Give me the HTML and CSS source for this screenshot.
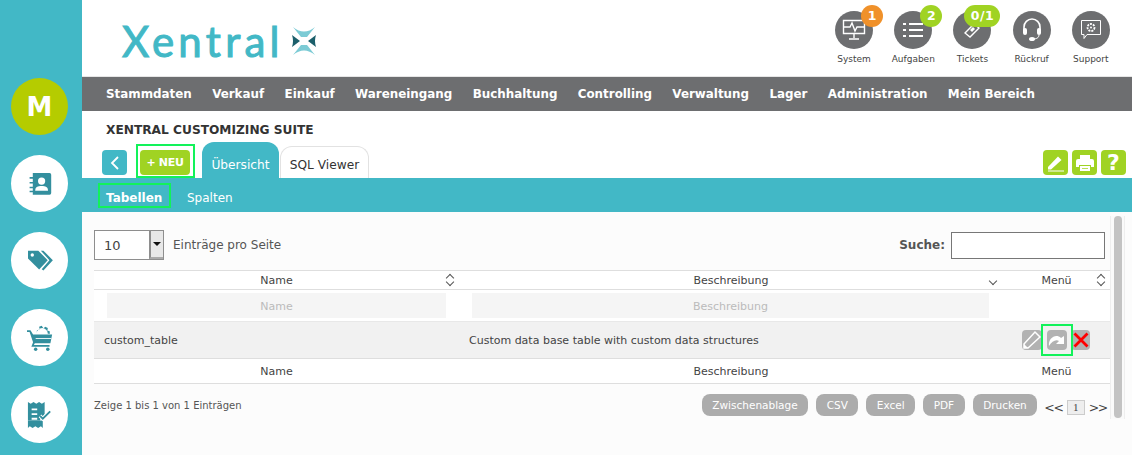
FILE: index.html
```html
<!DOCTYPE html>
<html lang="de">
<head>
<meta charset="utf-8">
<title>Xentral</title>
<link rel="stylesheet" href="styles.css">
</head>
<body>
<div class="app">
  <aside class="side">
    <div class="orb orb-user">M</div>
    <div class="orb"><svg width="24" height="25" viewBox="0 0 30 30"><path class="ic" d="M6 2h21a2 2 0 0 1 2 2v23a2 2 0 0 1-2 2H6v-3H2v-2h4v-3H2v-2h4v-4H2v-2h4V9H2V7h4z"/><circle cx="17" cy="12" r="4.500" fill="#fff"/><path d="M9 24c0-5 3-6 8-6s8 1 8 6z" fill="#fff"/></svg></div>
    <div class="orb"><svg width="26" height="24" viewBox="0 0 30 28"><path class="ic" d="M1 2h12l11 11-10 11L1 11z"/><circle cx="6" cy="7" r="2" fill="#fff"/><path d="M16 2h3l11 11-11 12-2-1.500L26 13z" class="ic"/></svg></div>
    <div class="orb"><svg width="26" height="28" viewBox="0 0 30 30"><path class="ic" d="M0 6h4l3 5h22l-2 10H9l-1 2h18v2H5l2-5L3 8H0z"/><circle cx="10" cy="28" r="2" class="ic"/><circle cx="24" cy="28" r="2" class="ic"/><path class="ic" d="M11 10a6.500 6.500 0 0 1 13 0h2.500l-.5-3-2.500-.5.500-3-3-1.500-2 2-2-3-3 1 .5 3-3 1-.5 4z"/><path d="M10 15h18v1H10z" fill="#fff"/></svg></div>
    <div class="orb"><svg width="26" height="26" viewBox="0 0 28 28"><path class="ic" d="M1 0l3 2 3-2 3 2 3-2 3 2 3-2v13l-5 6v1H1z"/><path class="ic" d="M1 20h16v8l-2-2-3 2-3-2-3 2-3-2-2 2z"/><path d="M5 7h6v2H5zM5 12h6v2H5zM5 17h6v2H5z" fill="#fff"/><path d="M14 15l3 3 8-8" fill="none" stroke="#fff" stroke-width="4"/><path d="M14 15l3 3 8-8" fill="none" stroke="#338f9e" stroke-width="2"/></svg></div>
  </aside>
  <div class="main">
    <header class="top">
      <div class="logo"><span class="logo-word">Xentral</span>
        <svg width="30" height="30" viewBox="0 0 30 30"><path d="M4 1q11 9 22 0l-8 10h-6z" fill="#7ccbd5"/><path d="M4 29q11-9 22 0l-8-10h-6z" fill="#7ccbd5"/><path d="M3 9l8 6-8 6q2-6 0-12z" fill="#1c5f6b"/><path d="M27 9l-8 6 8 6q-2-6 0-12z" fill="#1c5f6b"/></svg>
      </div>
      <nav class="tools">
        <div class="tool"><div class="tool-ic"><svg width="24" height="22" viewBox="0 0 24 22"><path d="M1.500 1.500h21v13h-21zM12 15v4M7 20h10M2 8h6l2-4 3 8 2-4h7" fill="none" stroke="#fff" stroke-width="1.400"/></svg><b class="badge badge-o">1</b></div><span>System</span></div>
        <div class="tool"><div class="tool-ic"><svg width="20" height="16" viewBox="0 0 20 16"><path d="M0 1h3v2H0zM0 7h3v2H0zM0 13h3v2H0zM6 1h14v2H6zM6 7h14v2H6zM6 13h14v2H6z" fill="#fff"/></svg><b class="badge badge-g">2</b></div><span>Aufgaben</span></div>
        <div class="tool"><div class="tool-ic"><svg width="16" height="16" viewBox="0 0 16 16"><path d="M1 11L10 2l5 4-9 9z" fill="none" stroke="#fff" stroke-width="1.400"/><path d="M6 8l3-3 2 2-3 3z" fill="#fff"/></svg><b class="badge badge-w">0/1</b></div><span>Tickets</span></div>
        <div class="tool"><div class="tool-ic"><svg width="22" height="24" viewBox="0 0 22 24"><path d="M3 12V9a8 8 0 0 1 16 0v3" fill="none" stroke="#fff" stroke-width="1.600"/><rect x="2" y="10" width="4" height="7" rx="2" fill="#fff"/><rect x="16" y="10" width="4" height="7" rx="2" fill="#fff"/><path d="M18 17c0 3-3 4-6 4" fill="none" stroke="#fff"/><ellipse cx="11" cy="21" rx="3" ry="2" fill="#fff"/></svg></div><span>Rückruf</span></div>
        <div class="tool"><div class="tool-ic"><svg width="22" height="22" viewBox="0 0 22 22"><path d="M1.500 1.500h19v14H7l-3 4v-4H1.500z" fill="none" stroke="#fff"/><circle cx="11" cy="8.500" r="3.500" fill="none" stroke="#fff" stroke-width="1.800" stroke-dasharray="2 1"/><circle cx="11" cy="8.500" r="1" fill="#fff"/></svg></div><span>Support</span></div>
      </nav>
    </header>
    <nav class="menu">
      <a>Stammdaten</a><a>Verkauf</a><a>Einkauf</a><a>Wareneingang</a><a>Buchhaltung</a><a>Controlling</a><a>Verwaltung</a><a>Lager</a><a>Administration</a><a>Mein Bereich</a>
    </nav>
    <h1 class="title">XENTRAL CUSTOMIZING SUITE</h1>
    <div class="tabbar">
      <button class="back"><svg width="10" height="14" viewBox="0 0 10 14"><path d="M8 1L2 7l6 6" fill="none" stroke="#fff" stroke-width="1.800"/></svg></button>
      <div class="mark mark-neu"><button class="neu">+ NEU</button></div>
      <div class="tab tab-on">Übersicht</div>
      <div class="tab tab-off">SQL Viewer</div>
      <div class="actions">
        <button class="act"><svg width="18" height="18" viewBox="0 0 18 18"><path d="M1 13L11 2.500l3.500 3.500L4 15.500H1z" fill="#fff"/><path d="M1 17h16" stroke="#fff"/></svg></button>
        <button class="act"><svg width="18" height="18" viewBox="0 0 18 18"><path d="M4 1h10v4H4z" fill="#fff"/><path d="M2 5h14a2 2 0 0 1 2 2v6h-3v-2H3v2H0V7a2 2 0 0 1 2-2z" fill="#fff"/><path d="M4 12h10v5H4z" fill="#fff"/><path d="M6 14h6v.800H6z" fill="#a5d82a"/></svg></button>
        <button class="act act-q">?</button>
      </div>
    </div>
    <div class="subbar">
      <a class="sub sub-on">Tabellen</a>
      <a class="sub">Spalten</a>
    </div>
    <div class="body">
      <div class="panel">
        <div class="controls">
          <div class="select"><span class="select-val">10</span><span class="select-arrow"></span></div>
          <span class="per">Einträge pro Seite</span>
          <label class="search">Suche:</label>
          <div class="search-box"></div>
        </div>
        <div class="table">
          <div class="row row-head">
            <div class="c c1">Name<i class="sort"></i></div>
            <div class="c c2">Beschreibung<i class="sort sort-down"></i></div>
            <div class="c c3">Menü<i class="sort"></i></div>
          </div>
          <div class="row row-filter">
            <div class="c c1"><div class="filter filter-a">Name</div></div>
            <div class="c c2"><div class="filter filter-b">Beschreibung</div></div>
            <div class="c c3"></div>
          </div>
          <div class="row row-data">
            <div class="c c1 cell-l">custom_table</div>
            <div class="c c2 cell-d">Custom data base table with custom data structures</div>
            <div class="c c3 icons">
              <span class="ibtn ibtn-edit"><svg width="20" height="20" viewBox="0 0 20 20"><path d="M2 14L13 2l5 5L6 18H2z" fill="none" stroke="#fff" stroke-width="1.500"/><path d="M2 14l4 4H2z" fill="#fff"/></svg></span>
              <span class="ibox"><span class="ibtn"><svg width="18" height="16" viewBox="0 0 18 16"><path d="M1 14C0 6 8 1 13 6l3-2v8H8l3-3C8 7 4 9 1 14z" fill="#fff"/></svg></span></span>
              <span class="ibtn ibtn-x"><svg width="16" height="16" viewBox="0 0 16 16"><path d="M1.500 1.500l13 13M14.500 1.500l-13 13" stroke="#f00" stroke-width="2.800"/></svg></span>
            </div>
          </div>
          <div class="row row-foot">
            <div class="c c1">Name</div>
            <div class="c c2">Beschreibung</div>
            <div class="c c3">Menü</div>
          </div>
        </div>
        <div class="tfoot">
          <span class="info">Zeige 1 bis 1 von 1 Einträgen</span>
          <div class="exports">
            <button class="exp">Zwischenablage</button>
            <button class="exp">CSV</button>
            <button class="exp">Excel</button>
            <button class="exp">PDF</button>
            <button class="exp">Drucken</button>
          </div>
          <div class="pager"><span>&lt;&lt;</span><span class="page">1</span><span>&gt;&gt;</span></div>
        </div>
      </div>
      <div class="scroll"><div class="thumb"></div></div>
    </div>
  </div>
</div>
</body>
</html>
```

FILE: styles.css
```css
* { box-sizing: border-box; }
html, body { margin: 0; height: 455px; overflow: hidden; }
body { font-family: "DejaVu Sans", Verdana, sans-serif; color: #333; background: #fff; }
button { font-family: inherit; border: 0; padding: 0; }

.app { display: flex; height: 455px; }
.side { width: 82px; flex: none; background: #42b8c6; padding: 78px 0 0 11px; display: flex; flex-direction: column; gap: 20px; }
.orb { width: 57px; height: 57px; border-radius: 50%; background: #fff; display: flex; align-items: center; justify-content: center; }
.orb-user { background: #b5cc00; color: #fff; font-weight: 700; font-size: 26px; }
.ic { fill: #338f9e; }

.main { flex: 1; min-width: 0; display: flex; flex-direction: column; }
.top { height: 76px; display: flex; justify-content: space-between; padding: 11px 11.600px 0 40px; }
.logo { display: flex; align-items: flex-start; gap: 5px; padding-top: 7px; }
.logo-word { font-family: "Lato", sans-serif; font-size: 42px; line-height: 46px; letter-spacing: 4.300px; color: #42b8c6; -webkit-text-stroke: 1px #42b8c6; }
.logo svg { margin-top: 8px; }
.tools { display: flex; }
.tool { width: 59.200px; display: flex; flex-direction: column; align-items: center; font-size: 9px; color: #444; }
.tool-ic { position: relative; width: 38px; height: 38px; border-radius: 50%; background: #6d6e70; display: flex; align-items: center; justify-content: center; margin-bottom: 4px; }
.tool span { line-height: 13px; }
.badge { position: absolute; top: -6px; height: 22px; border-radius: 11px; color: #fff; font-size: 12.500px; line-height: 22px; text-align: center; }
.badge-o { left: 26px; width: 22px; background: #f0912a; }
.badge-g { left: 26px; width: 22px; background: #a0d323; }
.badge-w { left: 11px; width: 36px; background: #a0d323; letter-spacing: .5px; }

.menu { height: 35px; background: #6d6e70; display: flex; align-items: center; padding-left: 24px; gap: 20.330px; border-top: 1px solid #e6e6e6; }
.menu a { color: #fff; font-weight: 700; font-size: 11.900px; }

.title { margin: 0; height: 31px; padding: 12px 0 0 24px; font-size: 12.200px; line-height: 15px; font-weight: 700; color: #333; }
.tabbar { height: 36px; display: flex; align-items: flex-start; position: relative; padding-left: 20px; }
.back { width: 25px; height: 25px; margin-top: 8px; border-radius: 4px; background: #42b8c6; display: flex; align-items: center; justify-content: center; }
.mark-neu { width: 59px; height: 34px; margin: 2px 0 0 9px; border: 2px solid #12f25a; padding: 4px 0 0 2px; }
.neu { width: 50px; height: 25px; border-radius: 4px; background: #a0d323; color: #fff; font-weight: 700; font-size: 11px; letter-spacing: -.3px; display: block; }
.tab { font-size: 12.200px; text-align: center; border-radius: 12px 12px 0 0; }
.tab-on { width: 77px; height: 36px; margin-left: 7px; background: #42b8c6; color: #fff; line-height: 46px; }
.tab-off { width: 89px; height: 32px; margin: 4px 0 0 1px; background: #fff; border: 1px solid #e2e2e2; border-bottom: 0; line-height: 36px; color: #333; }
.actions { margin-left: auto; margin-right: 6px; margin-top: 8px; display: flex; gap: 4px; }
.act { width: 25px; height: 25px; border-radius: 4px; background: #a0d323; color: #fff; display: flex; align-items: center; justify-content: center; }
.act-q { font-size: 22px; font-weight: 700; }

.subbar { height: 34px; background: #42b8c6; display: flex; align-items: center; padding-left: 16px; gap: 8px; }
.sub { color: #fff; font-size: 12px; height: 25px; line-height: 26px; padding: 0 6px; border: 2px solid transparent; }
.sub-on { font-weight: 700; border-color: #12f25a; width: 73px; }

.body { flex: 1; background: #fcfcfc; display: flex; padding: 4px 7px 0 12px; align-items: flex-start; }
.panel { width: 1016px; flex: none; }
.controls { height: 54px; display: flex; align-items: center; padding-top: 4px; font-size: 12px; color: #555; }
.select { width: 70px; height: 30px; border: 1px solid #8e8e8e; background: #fff; position: relative; display: flex; align-items: center; padding-left: 9px; font-size: 13px; color: #444; }
.select-arrow { position: absolute; right: 0; top: 0; width: 14px; height: 28px; background: #e8e8e8; border-left: 2px solid #8e8e8e; border-bottom: 2px solid #aaa; }
.select-arrow::after { content: ""; position: absolute; left: 2px; top: 11px; border: 4px solid transparent; border-top: 4px solid #111; }
.per { margin-left: 9px; }
.search { margin-left: auto; font-weight: 700; font-size: 12px; color: #555; }
.search-box { width: 154px; height: 27px; margin: 0 5px 0 6px; border: 1px solid #777; background: #fff; }

.table { font-size: 11px; color: #444; }
.row { display: flex; align-items: center; }
.c { position: relative; text-align: center; }
.c1 { width: 365px; }
.c2 { width: 544px; }
.c3 { width: 107px; }
.row-head { height: 20px; border-top: 1px solid #dedede; border-bottom: 1px solid #dedede; background: #fff; }
.row-filter { height: 31px; background: #fff; }
.filter { height: 25px; background: #f5f5f5; color: #bbb; line-height: 27px; }
.filter-a { width: 339px; margin-left: 13px; }
.filter-b { width: 517px; margin-left: 13px; }
.row-data { height: 37px; background: #f1f1f1; border-top: 1px solid #e8e8e8; }
.cell-l { text-align: left; padding-left: 10px; }
.cell-d { text-align: left; padding-left: 10px; }
.icons { display: flex; align-items: center; padding-left: 19px; }
.ibtn { width: 20px; height: 20px; background: #b2b2b2; border-radius: 4px; display: flex; align-items: center; justify-content: center; flex: none; }
.ibox { position: relative; z-index: 1; width: 32px; height: 32px; border: 2px solid #12f25a; display: flex; align-items: center; justify-content: center; margin-left: -1px; flex: none; }
.ibtn-x { width: 19px; margin-left: -2px; justify-content: flex-start; padding-left: 2px; }
.row-foot { height: 26px; background: #fff; border-top: 1px solid #dedede; border-bottom: 1px solid #dedede; }
.sort { position: absolute; right: 5px; top: 0; width: 8px; height: 12px; }
.sort::before, .sort::after { content: ""; position: absolute; left: 1px; width: 5px; height: 5px; border-left: 1px solid #555; border-top: 1px solid #555; transform: rotate(45deg); }
.sort::before { top: 1px; }
.sort::after { top: 5px; transform: rotate(225deg); }
.sort-down { right: 6px; top: -1px; }
.sort-down::before { display: none; }

.tfoot { display: flex; align-items: center; padding-top: 10px; }
.info { font-size: 10px; color: #555; }
.exports { margin-left: auto; display: flex; gap: 8px; }
.exp { height: 22px; padding: 0 10.500px; border-radius: 8px; background: #acacac; color: #fff; font-size: 10.500px; }
.pager { display: flex; align-items: center; gap: 4px; margin: 5px 3px 0 7px; font-size: 12.500px; letter-spacing: -1.300px; color: #444; }
.page { width: 18px; height: 15px; border: 1px solid #ccc; background: #eee; text-align: center; line-height: 13px; font-size: 11px; letter-spacing: 0; font-family: "Liberation Serif", serif; }

.scroll { width: 15px; height: 203px; background: #fafafa; border-left: 1px solid #eee; border-right: 1px solid #eee; padding: 0 3px; }
.thumb { width: 8px; height: 202px; background: #c3c3c3; border-radius: 4px; }
```
